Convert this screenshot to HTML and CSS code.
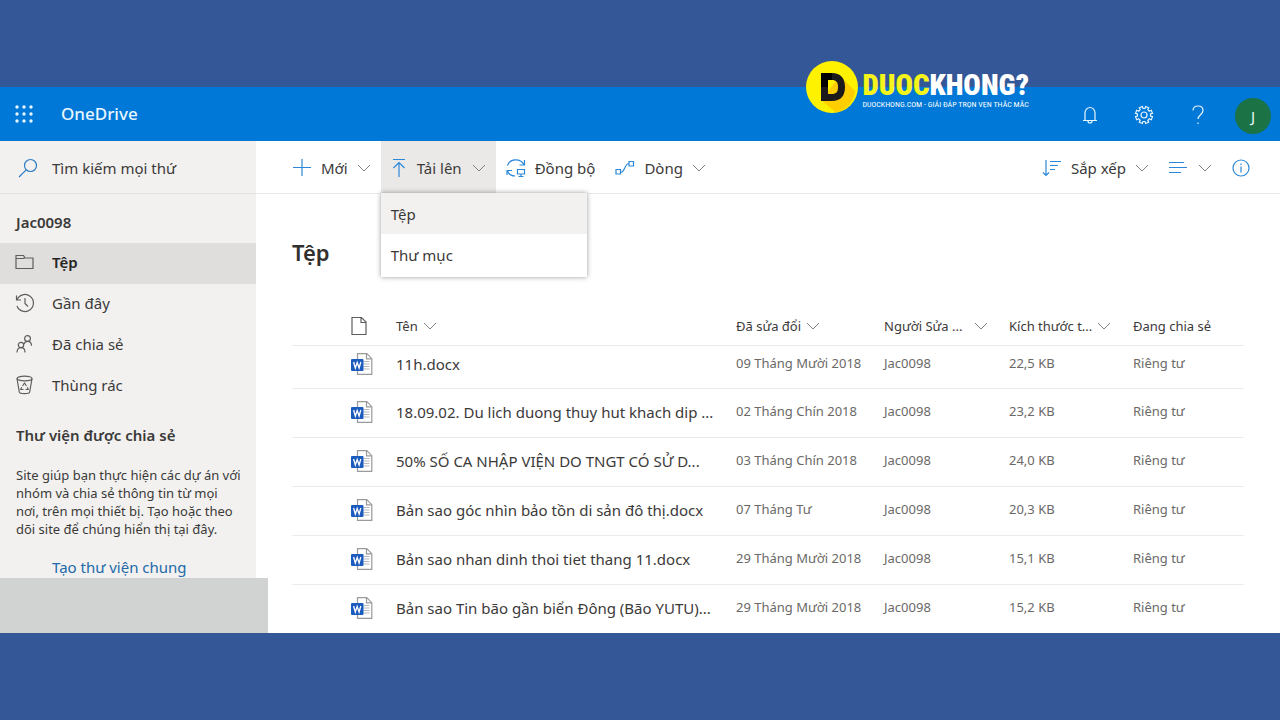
FILE: index.html
```html
<!DOCTYPE html>
<html lang="vi">
<head>
<meta charset="utf-8">
<meta name="viewport" content="width=device-width, initial-scale=1">
<title>OneDrive</title>
<link rel="stylesheet" href="styles.css">
</head>
<body>
<svg class="defs" aria-hidden="true">
  <symbol id="chevron" viewBox="0 0 14 10"><path d="M1 2l6 6 6-6"/></symbol>
  <symbol id="word" viewBox="0 0 22 22">
    <path d="M6.500 .7h9.300l5 5v15.600H6.500z" fill="#fff" stroke="#9a9a9a"/>
    <path d="M15.500 .9v5h5" fill="none" stroke="#9a9a9a"/>
    <path d="M12.500 8.500h6M12.500 11h6M12.500 13.500h6M12.500 16h6" stroke="#b5b9be"/>
    <rect x="0" y="6" width="12.500" height="12" rx="1" fill="#1b5bbd" stroke="none"/>
    <path d="M2.600 9l1.700 6 1.900-5.500L8.100 15l1.700-6" fill="none" stroke="#fff" stroke-width="1.300"/>
  </symbol>
</svg>

<div class="brand">
  <svg class="brand-mark" viewBox="0 0 52 52" aria-hidden="true">
    <circle cx="26" cy="26" r="26" fill="#fff200"/>
    <path d="M34 15L49 30a24 24 0 0 1-19 21.500L15 39z" fill="#ffce00"/>
    <path d="M15 12h11c8.500 0 13 5 13 14s-4.500 14-13 14H15zM22 19v14h4c4 0 6-2 6-7s-2-7-6-7z" fill="#1c1a1b" fill-rule="evenodd"/>
    <path d="M15 12h11v7h-4v7h-7z" fill="#000"/>
  </svg>
  <div class="brand-text">
    <div class="brand-name"><span>DUOC</span>KHONG?</div>
    <div class="brand-tag">DUOCKHONG.COM - GIẢI ĐÁP TRỌN VẸN THẮC MẮC</div>
  </div>
</div>

<div class="app">
  <header class="suite">
    <button class="waffle" aria-label="Trình khởi động ứng dụng">
      <svg width="18" height="18" viewBox="0 0 18 18"><circle cx="2" cy="2" r="1.700"/><circle cx="9" cy="2" r="1.700"/><circle cx="16" cy="2" r="1.700"/><circle cx="2" cy="9" r="1.700"/><circle cx="9" cy="9" r="1.700"/><circle cx="16" cy="9" r="1.700"/><circle cx="2" cy="16" r="1.700"/><circle cx="9" cy="16" r="1.700"/><circle cx="16" cy="16" r="1.700"/></svg>
    </button>
    <a class="suite-name" href="#">OneDrive</a>
    <div class="suite-tools">
      <button aria-label="Thông báo"><svg width="16" height="18" viewBox="0 0 16 18"><path d="M1 14.500h14M3 14.500V7a5 5.500 0 0 1 10 0v7.500M6 15a2 2 0 0 0 4 0"/></svg></button>
      <button aria-label="Cài đặt"><svg width="20" height="20" viewBox="0 0 20 20"><circle cx="10" cy="10" r="3"/><path d="M8.300 1.500l.7 2h2l.7-2 3 1.200-.9 2 1.500 1.500 2-.9 1.200 3-2 .7v2l2 .7-1.200 3-2-.9-1.500 1.500.9 2-3 1.200-.7-2H9l-.7 2-3-1.200.9-2-1.500-1.500-2 .9-1.200-3 2-.7V9l-2-.7 1.200-3 2 .9 1.500-1.500-.9-2z"/></svg></button>
      <button aria-label="Trợ giúp"><svg width="12" height="20" viewBox="0 0 12 20"><path d="M1 5.500C1 2.500 3 1 6 1s5 1.700 5 4.400c0 4-5 4.600-5 8.600M6 17.500v1.500"/></svg></button>
      <button class="avatar" aria-label="Tài khoản">J</button>
    </div>
  </header>

  <div class="body">
    <aside class="side">
      <label class="search">
        <svg width="20" height="20" viewBox="0 0 20 20"><circle cx="12.500" cy="7.500" r="6"/><path d="M8.200 11.800L1 19"/></svg>
        <input type="text" placeholder="Tìm kiếm mọi thứ" aria-label="Tìm kiếm mọi thứ">
      </label>
      <h2 class="owner">Jac0098</h2>
      <nav class="nav">
        <a class="active" href="#"><svg width="20" height="20" viewBox="0 0 20 20"><path d="M1 3.500h7.500l1.500 2.500h8v10.500H1zM1 6.500h7.500l1.500-1"/></svg>Tệp</a>
        <a href="#"><svg width="20" height="20" viewBox="0 0 20 20"><path d="M2 7A8.500 8.500 0 1 1 2 13M1.500 2.500V7H6M10 5v5.500l3 3"/></svg>Gần đây</a>
        <a href="#"><svg width="20" height="20" viewBox="0 0 20 20"><circle cx="6" cy="11" r="2.700"/><path d="M2 18.500c0-3 1.500-4.800 4-4.800s4 1.800 4 4.800"/><circle cx="12.500" cy="4.500" r="2.900"/><path d="M9 10c.6-1.600 1.800-2.600 3.500-2.600 2.500 0 4 1.700 4 4.300"/></svg>Đã chia sẻ</a>
        <a href="#"><svg width="20" height="20" viewBox="0 0 20 20"><ellipse cx="9.500" cy="3.500" rx="7.500" ry="2.300"/><path d="M2 3.500l2.300 13.500c.3 2.200 10.100 2.200 10.400 0L17 3.500M7.500 11l2-3 2 3M6.700 12.300L5.800 14.500h2.700M12.300 12.300l.9 2.200h-2.700"/></svg>Thùng rác</a>
      </nav>
      <h3 class="lib-title">Thư viện được chia sẻ</h3>
      <p class="lib-text">Site giúp bạn thực hiện các dự án với nhóm và chia sẻ thông tin từ mọi nơi, trên mọi thiết bị. Tạo hoặc theo dõi site để chúng hiển thị tại đây.</p>
      <a class="lib-link" href="#">Tạo thư viện chung</a>
      <div class="status"></div>
    </aside>

    <div class="content">
      <div class="commands">
        <button class="cmd"><svg width="20" height="20" viewBox="0 0 20 20"><path d="M10 1v17M1 9.500h18"/></svg>Mới<svg class="chev" width="14" height="10"><use href="#chevron"/></svg></button>
        <div class="cmd-wrap">
          <button class="cmd open" aria-expanded="true"><svg width="16" height="20" viewBox="0 0 16 20"><path d="M2 1.500h12M8 19V4.500M2.500 10L8 4.500l5.500 5.500"/></svg>Tải lên<svg class="chev" width="14" height="10"><use href="#chevron"/></svg></button>
          <div class="menu" role="menu">
            <button class="current" role="menuitem">Tệp</button>
            <button role="menuitem">Thư mục</button>
          </div>
        </div>
        <button class="cmd"><svg width="20" height="20" viewBox="0 0 20 20"><path d="M1.500 7.500C4 .5 14 0 18 6.500M18.500 2v5H13.500M9 18c-3.500 0-6-1.500-7.500-5M1 17v-4.500h5M11.500 11.500h7V16h-7zM15 16v2.500M12.500 18.500h5"/></svg>Đồng bộ</button>
        <button class="cmd"><svg width="20" height="20" viewBox="0 0 20 20"><path d="M1 11.500h4.500V16H1zM14 3.500h4.500V8H14zM5.500 14.500c4.500 0 4-9 8.500-9"/></svg>Dòng<svg class="chev" width="14" height="10"><use href="#chevron"/></svg></button>
        <div class="right">
          <button class="cmd"><svg width="20" height="20" viewBox="0 0 20 20"><path d="M4 2v15.500M1 14.500l3 3 3-3M8 3.500h11M8 7.500h8M8 11.500h5"/></svg>Sắp xếp<svg class="chev" width="14" height="10"><use href="#chevron"/></svg></button>
          <button class="cmd view" aria-label="Tùy chọn xem"><svg width="20" height="20" viewBox="0 0 20 20"><path d="M0 4.500h15M0 9.500h18M0 14.500h12"/></svg><svg class="chev" width="14" height="10"><use href="#chevron"/></svg></button>
          <button class="cmd info" aria-label="Thông tin"><svg width="18" height="18" viewBox="0 0 18 18"><circle cx="9" cy="9" r="8"/><path d="M9 7.500v6M9 4.500V6"/></svg></button>
        </div>
      </div>

      <main class="files">
        <h1>Tệp</h1>
        <table>
          <colgroup><col class="c-icon"><col><col class="c-date"><col class="c-by"><col class="c-size"><col class="c-share"></colgroup>
          <thead><tr>
            <th class="icon"><svg width="16" height="20" viewBox="0 0 16 20"><path d="M1 1.500h9.500l4.500 4.500v12.500H1zM10 1.500V6.500h5"/></svg></th>
            <th>Tên<svg class="chev" width="14" height="10"><use href="#chevron"/></svg></th>
            <th>Đã sửa đổi<svg class="chev" width="14" height="10"><use href="#chevron"/></svg></th>
            <th>Người Sửa ...<svg class="chev far" width="14" height="10"><use href="#chevron"/></svg></th>
            <th>Kích thước t...<svg class="chev" width="14" height="10"><use href="#chevron"/></svg></th>
            <th>Đang chia sẻ</th>
          </tr></thead>
          <tbody>
            <tr><td class="icon"><svg width="22" height="22"><use href="#word"/></svg></td><td class="name">11h.docx</td><td>09 Tháng Mười 2018</td><td>Jac0098</td><td>22,5 KB</td><td>Riêng tư</td></tr>
            <tr><td class="icon"><svg width="22" height="22"><use href="#word"/></svg></td><td class="name">18.09.02. Du lich duong thuy hut khach dip ...</td><td>02 Tháng Chín 2018</td><td>Jac0098</td><td>23,2 KB</td><td>Riêng tư</td></tr>
            <tr><td class="icon"><svg width="22" height="22"><use href="#word"/></svg></td><td class="name">50% SỐ CA NHẬP VIỆN DO TNGT CÓ SỬ D...</td><td>03 Tháng Chín 2018</td><td>Jac0098</td><td>24,0 KB</td><td>Riêng tư</td></tr>
            <tr><td class="icon"><svg width="22" height="22"><use href="#word"/></svg></td><td class="name">Bản sao góc nhìn bảo tồn di sản đô thị.docx</td><td>07 Tháng Tư</td><td>Jac0098</td><td>20,3 KB</td><td>Riêng tư</td></tr>
            <tr><td class="icon"><svg width="22" height="22"><use href="#word"/></svg></td><td class="name">Bản sao nhan dinh thoi tiet thang 11.docx</td><td>29 Tháng Mười 2018</td><td>Jac0098</td><td>15,1 KB</td><td>Riêng tư</td></tr>
            <tr><td class="icon"><svg width="22" height="22"><use href="#word"/></svg></td><td class="name">Bản sao Tin bão gần biển Đông (Bão YUTU)...</td><td>29 Tháng Mười 2018</td><td>Jac0098</td><td>15,2 KB</td><td>Riêng tư</td></tr>
          </tbody>
        </table>
      </main>
    </div>
  </div>
</div>
</body>
</html>
```
FILE: styles.css
```css
* { box-sizing: border-box; }
body {
  margin: 0;
  padding: 87px 0;
  background: #335797;
  color: #3b3a39;
  font: 15px/20px "Noto Sans", "Open Sans", sans-serif;
  position: relative;
}
svg { fill: none; stroke: currentColor; stroke-width: 1.2; flex: none; display: block; }
.defs { position: absolute; width: 0; height: 0; }
button { font: inherit; color: inherit; background: none; border: 0; padding: 0; text-align: left; }
a { color: inherit; text-decoration: none; }
h1, h2, h3, p { margin: 0; }
.chev { color: #858381; stroke-width: 1; }

.brand { position: absolute; top: 61px; left: 63%; display: flex; gap: 4px; color: #fff; }
.brand-mark { width: 52px; height: 52px; stroke: none; }
.brand-text { padding-top: 10px; white-space: nowrap; font-family: "Roboto Condensed", Roboto, sans-serif; font-weight: 900; }
.brand-name { font-size: 29px; line-height: 28px; }
.brand-name span { color: #f5f51c; }
.brand-tag { font-size: 8px; line-height: 12px; font-weight: 400; }

.suite { display: flex; align-items: center; height: 54px; background: #0078d7; color: #e8f6ff; padding: 0 9px 0 15px; }
.waffle svg { fill: currentColor; stroke: none; }
.suite-name { margin-left: 28px; font-size: 17px; font-weight: 500; }
.suite-tools { margin-left: auto; display: flex; align-items: center; padding-top: 2px; }
.suite-tools button { width: 54px; display: flex; justify-content: center; }
.suite-tools .avatar { width: 36px; height: 36px; margin: 2px 0 0 10px; border-radius: 50%; background: #1b7245; align-items: center; }

.body { display: grid; grid-template-columns: 256px 1fr; background: #fff; }
.side { background: #f2f1f0; position: relative; }
.search { display: flex; align-items: center; gap: 14px; height: 53px; padding: 2px 18px 0; border-bottom: 1px solid #e3e2e1; color: #2b7cc4; }
.search input { width: 100%; min-width: 0; border: 0; padding: 0; background: none; font: inherit; outline: 0; }
.search input::placeholder { color: #3b3a39; opacity: 1; }
.owner { padding: 18px 16px 11px; font-size: 15px; line-height: 20px; font-weight: 600; }
.nav a { display: flex; align-items: center; gap: 17px; height: 41px; padding: 0 15px 4px; }
.nav svg { color: #605e5c; }
.nav .active { background: #dfdedd; font-weight: 600; color: #252423; }
.lib-title { padding: 18px 16px 0; font-size: 15px; line-height: 20px; font-weight: 600; }
.lib-text { padding: 21px 14px 0 16px; font-size: 13px; line-height: 18px; }
.lib-link { display: block; padding: 19px 16px 0 52px; color: #2269a8; }
.status { position: absolute; left: 0; bottom: 0; width: 268px; height: 55px; background: #d1d3d2; }

.content { min-width: 0; }
.commands { display: flex; height: 53px; padding: 0 20px 0 26px; border-bottom: 1px solid #eae9e8; }
.cmd { display: flex; align-items: center; gap: 9px; height: 52px; padding: 2px 10px 0; white-space: nowrap; }
.cmd svg { color: #2b88d8; }
.cmd .chev { color: #858381; }
.cmd-wrap { position: relative; }
.open { background: #eae9e8; gap: 10px; }
.menu { position: absolute; top: 52px; left: 0; width: 206px; padding-bottom: 2px; background: #fff; box-shadow: 0 0 5px rgba(0,0,0,.4); }
.menu button { display: block; width: 100%; height: 41px; padding: 0 10px; }
.menu .current { background: #f2f1f0; }
.right { display: flex; margin-left: auto; }

.files { padding: 44px 36px 0; }
h1 { font-size: 22px; line-height: 28px; font-weight: 600; color: #323130; }
table { width: 100%; margin-top: 39px; table-layout: fixed; border-collapse: collapse; }
.c-icon { width: 104px; }
.c-date { width: 148px; }
.c-by { width: 125px; }
.c-size { width: 124px; }
.c-share { width: 111px; }
th, td { padding: 0; height: 49px; font-size: 13px; text-align: left; white-space: nowrap; border-bottom: 1px solid #edebe9; }
th { height: 40px; padding-top: 2px; font-weight: 400; }
td { color: #6b6967; padding-bottom: 3px; }
th .chev { display: inline-block; margin-left: 5px; }
th .far { margin-left: 12px; }
.icon { padding-left: 59px; }
.icon svg { color: #605e5c; }
.name { font-size: 15px; color: #3b3a39; padding-bottom: 1px; }
td.icon { padding-bottom: 1px; }
tbody tr:first-child td { height: 43px; padding-bottom: 7px; }
tbody tr:first-child .name, tbody tr:first-child .icon { padding-bottom: 5px; }
tbody tr:last-child td { border-bottom: 0; }
```
